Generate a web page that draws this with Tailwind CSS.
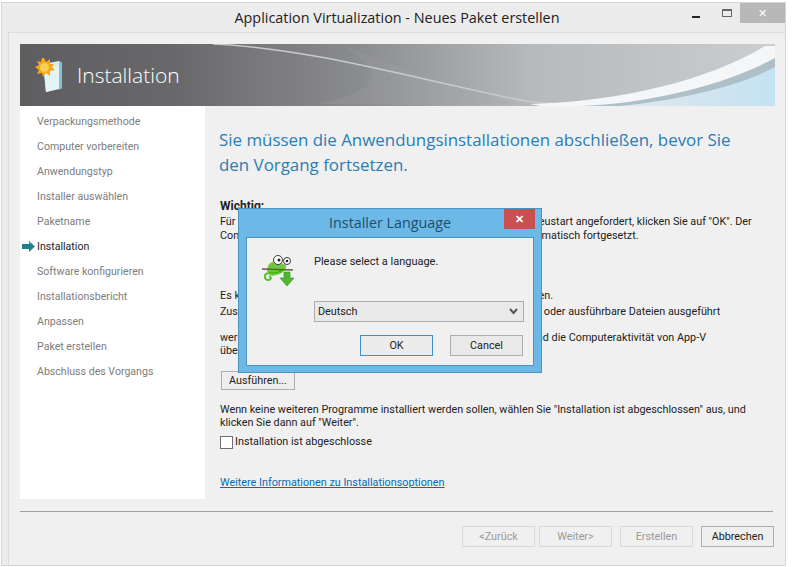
<!DOCTYPE html>
<html lang="de">
<head>
<meta charset="UTF-8">
<title>Application Virtualization</title>
<script src="https://cdn.jsdelivr.net/npm/@tailwindcss/browser@4"></script>
</head>
<body class="bg-white font-['Roboto','Open_Sans',sans-serif] text-[10.8px] leading-[14px] text-[#222] overflow-hidden">
<div class="relative w-[795px] h-[567px] pl-px pt-[2px]">
  <!-- main window -->
  <div class="relative w-[785px] h-[564px] bg-[#ececec] border border-[#d4d4d4] flex flex-col">
    <div class="relative h-[29px] shrink-0 flex items-center justify-center font-['Open_Sans'] text-[14.4px] text-[#222] pl-[7px]">
      Application Virtualization - Neues Paket erstellen
      <div class="absolute right-0 top-0 flex items-start">
        <div class="w-[26px] h-[21px] flex justify-center pt-[13px]"><div class="w-[8px] h-[2px] bg-[#222]"></div></div>
        <div class="w-[26px] h-[21px] flex justify-center pt-[6px] ml-[5px]"><div class="w-[10px] h-[8px] border border-[#666] border-t-2"></div></div>
        <div class="w-[45px] h-[20px] bg-[#b8b8b8] flex items-center justify-center text-white text-[11px]">✕</div>
      </div>
    </div>
    <div class="ml-[6px] w-[777px] flex-1 bg-[#f0f0f0] border-t border-l border-[#dcdcdc] pt-[11px] pl-[11px] flex flex-col">
      <!-- banner -->
      <div class="relative w-[755px] h-[62px] shrink-0 flex items-center pl-[57px] text-white font-['Open_Sans'] font-light text-[21px]">
        <svg class="absolute left-0 top-0" width="755" height="62" viewBox="0 0 755 62">
          <defs>
            <linearGradient id="bg" x1="0" x2="1" y1="0" y2="0">
              <stop offset="0" stop-color="#5e5e60"/>
              <stop offset="0.2" stop-color="#68686a"/>
              <stop offset="0.45" stop-color="#8b8c8e"/>
              <stop offset="0.68" stop-color="#b7babc"/>
              <stop offset="1" stop-color="#cbcdcf"/>
            </linearGradient>
            <linearGradient id="sky" x1="0" x2="1" y1="0" y2="0">
              <stop offset="0" stop-color="#dfe8ec"/>
              <stop offset="1" stop-color="#c4e2f2"/>
            </linearGradient>
          </defs>
          <rect width="755" height="62" fill="url(#bg)"/>
          <path d="M320 0 C380 25 440 45 500 60 L300 60 C360 45 370 30 320 0Z" fill="#a4a6a8" opacity="0.22"/>
          <path d="M193 0 C290 4 400 36 500 56 C525 60 555 61 580 61" fill="none" stroke="#c8cacc" stroke-width="1.500"/>
          <path d="M520 62 C620 56 700 35 755 3 L755 26 C700 50 640 60 600 62Z" fill="#aebfc8"/>
          <path d="M600 62 C660 56 720 42 755 23 L755 62Z" fill="url(#sky)"/>
          <path d="M510 60 C600 58 690 36 745 2 L755 2 L755 14 C700 44 620 60 560 62 L520 62Z" fill="#f4f6f7"/>
        </svg>
        <svg class="absolute left-[15px] top-[14px]" width="28" height="34" viewBox="0 0 28 34">
          <path d="M8 6 L24 3 L27 5 L27 30 L11 34Z" fill="#d6eef2"/>
          <path d="M24 3 L27 5 L27 30 L24 32Z" fill="#7fc4cf"/>
          <path d="M9 12 L24 8 L24 31 L11 34Z" fill="#e4f4f6"/>
          <path d="M9 0 L11 4 L15 1 L15 6 L19 6 L17 9 L20 12 L15 13 L15 18 L11 15 L8 19 L7 15 L2 16 L4 12 L0 9 L4 7 L2 3 L6 4 L7 0Z" fill="#f7a717"/>
          <circle cx="9.500" cy="9.500" r="4.500" fill="#fbcf50"/>
        </svg>
        <span class="relative">Installation</span>
      </div>
      <div class="flex w-[755px] h-[393px] shrink-0">
        <!-- steps -->
        <div class="relative w-[185px] bg-white pt-[9px] pl-[17px] flex flex-col text-[#7d7d7d] text-[10.6px]">
          <div class="h-[25px]">Verpackungsmethode</div>
          <div class="h-[25px]">Computer vorbereiten</div>
          <div class="h-[25px]">Anwendungstyp</div>
          <div class="h-[25px]">Installer auswählen</div>
          <div class="h-[25px]">Paketname</div>
          <div class="relative h-[25px] text-[#222]">
            <svg class="absolute left-[-15px] top-[1px]" width="13" height="11" viewBox="0 0 13 11"><path d="M0 3 H7 V0 L13 5.500 L7 11 V8 H0Z" fill="#1f7f8c"/><path d="M0 3 H7 V0 L10 3Z" fill="#3fa9a0"/></svg>
            Installation
          </div>
          <div class="h-[25px]">Software konfigurieren</div>
          <div class="h-[25px]">Installationsbericht</div>
          <div class="h-[25px]">Anpassen</div>
          <div class="h-[25px]">Paket erstellen</div>
          <div class="h-[25px]">Abschluss des Vorgangs</div>
        </div>
        <!-- content -->
        <div class="flex-1 pl-[15px] pt-[21px] whitespace-nowrap overflow-hidden">
          <h1 class="-ml-px text-[#2a7eb5] font-['Open_Sans'] text-[16.9px] leading-[25px] font-normal">Sie müssen die Anwendungsinstallationen abschließen, bevor Sie<br>den Vorgang fortsetzen.</h1>
          <div class="mt-[21px] font-bold text-[12px] leading-[16px]">Wichtig:</div>
          <div class="mt-px">
            <div>Für einige solcher Programme wird möglicherweise ein Computerneustart angefordert, klicken Sie auf "OK". Der</div>
            <div>Computer wird jetzt neu gestartet, und die Sequenzierung wird automatisch fortgesetzt.</div>
          </div>
          <div class="mt-[46px]">Es können auch mehrere Programme nacheinander installiert werden.</div>
          <div class="mt-[2px]">Zusätzlich kann auch Batchdateien, Skripts und andere Programme oder ausführbare Dateien ausgeführt</div>
          <div class="mt-[12px]">werden, um alle laufenden Systemressourcen, Hintergrunddienst und die Computeraktivität von App-V</div>
          <div class="-mt-px">überwacht.</div>
          <div class="ml-px mt-[13px] w-[74px] h-[19px] border border-[#adadad] bg-[#eeeeee] flex items-center justify-center">Ausführen...</div>
          <div class="mt-[13px]">Wenn keine weiteren Programme installiert werden sollen, wählen Sie "Installation ist abgeschlossen" aus, und</div>
          <div class="-mt-px">klicken Sie dann auf "Weiter".</div>
          <div class="mt-[5px] flex items-center gap-[2px]">
            <div class="w-[13px] h-[13px] border border-[#707070] bg-white"></div>
            <span>Installation ist abgeschlosse</span>
          </div>
          <a class="block mt-[27px] text-[#0d6aa8] underline">Weitere Informationen zu Installationsoptionen</a>
        </div>
      </div>
      <div class="w-[753px] h-px bg-[#a0a0a0] mt-[12px]"></div>
      <div class="flex w-[754px] justify-end mt-[14px] text-[#9a9a9a]">
        <div class="w-[73px] h-[21px] border border-[#d9d9d9] flex items-center justify-center pt-px">&lt;Zurück</div>
        <div class="w-[73px] h-[21px] border border-[#d9d9d9] flex items-center justify-center pt-px ml-[4px]">Weiter&gt;</div>
        <div class="w-[73px] h-[21px] border border-[#d9d9d9] flex items-center justify-center pt-px ml-[8px]">Erstellen</div>
        <div class="w-[73px] h-[21px] border border-[#adadad] bg-[#efefef] text-[#222] flex items-center justify-center pt-px ml-[8px]">Abbrechen</div>
      </div>
    </div>
  </div>

  <!-- language dialog -->
  <div class="absolute left-[238px] top-[208px] w-[304px] h-[165px] bg-[#6cb8e6] border border-[#4a94c4] flex flex-col">
    <div class="relative h-[28px] shrink-0 flex items-center justify-center font-['Open_Sans'] text-[14.3px] text-[#1f4f6d]">
      Installer Language
      <div class="absolute right-[6px] top-0 w-[31px] h-[20px] bg-[#c75050] flex items-center justify-center text-white text-[11px] font-bold">✕</div>
    </div>
    <div class="mx-[7px] flex-1 mb-[6px] bg-[#f0f0f0] border border-[#4a94c4] relative pt-[17px] pl-[67px]">
      <svg class="absolute left-[15px] top-[15px]" width="34" height="34" viewBox="0 0 34 34">
        <path d="M7 20 C1 20 2 28 7 27 C10 26 9 23 7 24" fill="none" stroke="#58bf2a" stroke-width="2"/>
        <path d="M6 21 C3 13 9 8 14 8 L24 12 C25 17 20 21 14 22 C11 23 8 23 6 21Z" fill="#68cf33"/>
        <path d="M7 19 C10 21 17 20 22 16" fill="none" stroke="#3f9a1f" stroke-width="1"/>
        <circle cx="16" cy="7" r="4.500" fill="#fff" stroke="#3a3a3a"/>
        <circle cx="25" cy="8" r="3.500" fill="#fff" stroke="#3a3a3a"/>
        <circle cx="17" cy="7" r="1.500" fill="#222"/>
        <circle cx="25" cy="8" r="1.300" fill="#222"/>
        <path d="M0 16 L31 17" stroke="#6b5a44" stroke-width="1.500"/>
        <path d="M22 19 H28 V25 H32 L25 33 L18 25 H22Z" fill="#4fb82c" stroke="#2f8f1a" stroke-width="0.600"/>
      </svg>
      <div class="text-[11px]">Please select a language.</div>
      <div class="mt-[32px] w-[210px] h-[21px] border border-[#acacac] bg-[#e9e9e9] flex items-center justify-between pl-[3px] pr-[5px]">
        <span class="pt-px">Deutsch</span>
        <svg width="9" height="7" viewBox="0 0 9 7"><path d="M1 1 L4.500 5 L8 1" fill="none" stroke="#555" stroke-width="2"/></svg>
      </div>
      <div class="mt-[13px] flex gap-[17px] pl-[46px]">
        <div class="w-[73px] h-[21px] border border-[#3c8fd0] bg-[#ececec] flex items-center justify-center">OK</div>
        <div class="w-[73px] h-[21px] border border-[#adadad] bg-[#e9e9e9] flex items-center justify-center">Cancel</div>
      </div>
    </div>
  </div>
</div>
</body>
</html>
